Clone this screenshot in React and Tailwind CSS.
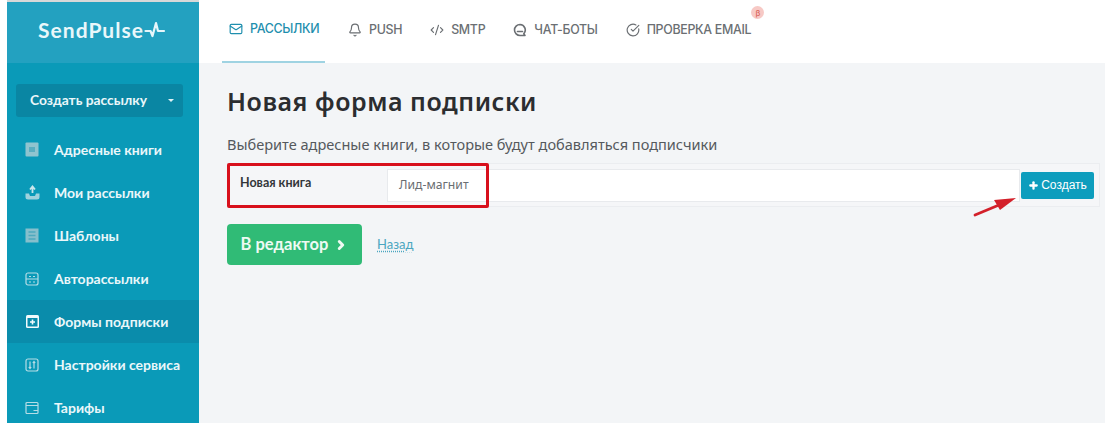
import React from "react";
import { Mail, Bell, CodeXml, CircleCheckBig, ChevronRight, Plus } from "lucide-react";

const ChatIcon = ({ size = 14 }) => (
  <svg width={size} height={size} viewBox="0 0 14 14" fill="none" stroke="currentColor" strokeWidth="1.600">
    <path d="M7 1.500a5.500 5.500 0 1 0 0 11h5l-1.200-1.800A5.500 5.500 0 0 0 7 1.500z" strokeLinejoin="round" />
    <path d="M4.500 8.500h5" strokeLinecap="round" />
  </svg>
);

const tabs = [
  { label: "РАССЫЛКИ", icon: Mail, active: true },
  { label: "PUSH", icon: Bell },
  { label: "SMTP", icon: CodeXml },
  { label: "ЧАТ-БОТЫ", icon: ChatIcon },
  { label: "ПРОВЕРКА EMAIL", icon: CircleCheckBig, beta: true },
];

const BookIcon = () => (
  <svg width="14" height="15" viewBox="0 0 14 15">
    <rect x="0.500" y="0.500" width="13" height="14" rx="1" fill="#8fc4cf" />
    <rect x="4" y="5" width="6" height="5" fill="#5aaec0" />
  </svg>
);

const SendIcon = () => (
  <svg width="15" height="15" viewBox="0 0 15 15">
    <path d="M0.500 8.500h3.500l1 2.500h5l1-2.500h3.500V12a2.500 2.500 0 0 1-2.500 2.500H3A2.500 2.500 0 0 1 0.500 12z" fill="#9fd2dd" />
    <path d="M7.500 8V2.500M5 4.500l2.500-3 2.500 3" fill="none" stroke="#c8e6ec" strokeWidth="1.800" />
  </svg>
);

const TemplateIcon = () => (
  <svg width="14" height="15" viewBox="0 0 14 15">
    <rect x="0.500" y="0.500" width="13" height="14" fill="#86bfcc" />
    <path d="M3.500 4h7M3.500 7.500h7M3.500 11h7" stroke="#4fa9bd" strokeWidth="1.400" />
  </svg>
);

const AutoIcon = () => (
  <svg width="14" height="14" viewBox="0 0 14 14" fill="none" stroke="#b5dde6" strokeWidth="1.200">
    <rect x="1" y="1" width="12" height="12" rx="2" />
    <path d="M1 7h12M4 4.500h2M8 4.500h2M4 10h2M8 10h2" />
  </svg>
);

const FormIcon = () => (
  <svg width="15" height="15" viewBox="0 0 15 15">
    <rect x="1" y="1" width="13" height="13" rx="1.500" fill="#f2fafc" />
    <rect x="2.500" y="4" width="10" height="8.500" fill="#0a8cab" />
    <path d="M7.500 5.500v5M5 8h5" stroke="#f2fafc" strokeWidth="1.600" />
  </svg>
);

const SettingsIcon = () => (
  <svg width="14" height="14" viewBox="0 0 14 14" fill="none" stroke="#b5dde6" strokeWidth="1.200">
    <rect x="1" y="1" width="12" height="12" rx="2" />
    <path d="M5 3.500v7M3.800 9l1.200 1.500L6.200 9M9 10.500v-7M7.800 5L9 3.500 10.200 5" />
  </svg>
);

const PriceIcon = () => (
  <svg width="14" height="14" viewBox="0 0 14 14" fill="none" stroke="#b5dde6" strokeWidth="1.200">
    <rect x="1" y="1.500" width="12" height="11" rx="1" />
    <path d="M1 4.500h12M8.500 9.500H13" />
  </svg>
);

const menu = [
  { label: "Адресные книги", icon: <BookIcon /> },
  { label: "Мои рассылки", icon: <SendIcon /> },
  { label: "Шаблоны", icon: <TemplateIcon /> },
  { label: "Авторассылки", icon: <AutoIcon /> },
  { label: "Формы подписки", icon: <FormIcon />, active: true },
  { label: "Настройки сервиса", icon: <SettingsIcon /> },
  { label: "Тарифы", icon: <PriceIcon /> },
];

const Pulse = () => (
  <svg width="23" height="18" viewBox="0 0 22 18" fill="none" stroke="#e6f6fa" strokeWidth="2.200" strokeLinejoin="round" strokeLinecap="round">
    <path d="M1 10h5l2 5 3.500-13 2 8h6" />
  </svg>
);

export default function App() {
  return (
    <div className="w-[1110px] h-[428px] overflow-hidden bg-white flex pl-[7px] pr-[5px] pb-[5px] font-['Noto_Sans',sans-serif]">
      {/* Sidebar */}
      <aside className="w-[192px] shrink-0 flex flex-col bg-[#0a9ab8] border-t-2 border-[#d8d8d8] overflow-hidden">
        <div className="h-[61px] shrink-0 bg-[#23a1c0] flex items-center justify-center text-[#e9f7fa] text-[21px] font-bold font-['Lato',sans-serif] tracking-[1px] pb-[6px] pr-[1px]">
          SendPulse
          <Pulse />
        </div>
        <div className="ml-[9px] mr-[16px] mt-[21px] h-[33px] shrink-0 rounded-[3px] bg-[#0a86a3] flex items-center justify-between pl-[14px] pr-[9px] text-[#eaf7fa] text-[13.800px] font-bold font-['Lato',sans-serif]">
          Создать рассылку
          <span className="w-0 h-0 border-x-[3px] border-x-transparent border-t-[3px] border-t-[#dff2f6]" />
        </div>
        <nav className="mt-[11px] flex flex-col">
          {menu.map((m) => (
            <div
              key={m.label}
              className={`h-[43px] shrink-0 flex items-center pl-[18px] text-[#eaf7fa] text-[14px] font-bold font-['Lato',sans-serif] ${m.active ? "bg-[#0a8cab]" : ""}`}
            >
              <span className="w-[29px] flex items-center">{m.icon}</span>
              {m.label}
            </div>
          ))}
        </nav>
      </aside>

      <div className="flex-1 flex flex-col bg-[#f3f5f7]">
        {/* Top tabs */}
        <header className="h-[63px] shrink-0 bg-white flex pl-[23px] gap-[28px]">
          {tabs.map((t) => {
            const Icon = t.icon;
            return (
              <div
                key={t.label}
                className={`relative flex items-center gap-[7px] h-[63px] pb-[3px] text-[12.400px] font-medium font-['Inter',sans-serif] tracking-[-0.3px] ${
                  t.active ? "text-[#1f8fae] border-b-2 border-[#9fd3e2] w-[103px] pl-[7px] -mr-[5px]" : "text-[#6b6f73]"
                }`}
              >
                <Icon size={14} strokeWidth={2} />
                {t.label}
                {t.beta && (
                  <span className="absolute right-[-13px] top-[6px] w-[13px] h-[13px] rounded-full bg-[#f7c9c5] text-[#d9645c] text-[8px] flex items-center justify-center">
                    β
                  </span>
                )}
              </div>
            );
          })}
        </header>

        {/* Content */}
        <main className="relative pl-[28px] pr-[5px] pt-[21px]">
          <h1 className="text-[25px] leading-[34px] font-semibold text-[#2b2d30] tracking-[0.55px] font-['Noto_Sans',sans-serif]">
            Новая форма подписки
          </h1>
          <p className="mt-[16px] text-[14.550px] leading-[20px] text-[#55595d] font-['Noto_Sans',sans-serif]">
            Выберите адресные книги, в которые будут добавляться подписчики
          </p>

          <div className="mt-[9px] h-[44px] flex items-center bg-[#f5f6f8] border border-[#ebedf0]">
            <span className="w-[159px] pl-[12px] pb-[4px] shrink-0 text-[12.500px] font-bold text-[#33363a] font-['Lato',sans-serif]">Новая книга</span>
            <div className="flex-1 h-[33px] bg-white border border-[#e8eaed] flex items-center pl-[11px] text-[12.200px] text-[#6a6e72] font-['Noto_Sans',sans-serif]">
              Лид-магнит
            </div>
            <button className="ml-[1px] mr-[5px] w-[73px] h-[27px] rounded-[2px] bg-[#0d9dbd] text-white text-[12px] flex items-center justify-center gap-[2px] font-['Liberation_Sans',sans-serif]">
              <Plus size={11} strokeWidth={5} />
              Создать
            </button>
          </div>

          <div className="mt-[17px] flex items-center">
            <button className="w-[135px] h-[41px] rounded-[4px] bg-[#30bb76] text-[#eefaf3] text-[16.500px] font-bold flex items-center justify-center gap-[6px] font-['Lato',sans-serif]">
              В редактор
              <ChevronRight size={14} strokeWidth={5} />
            </button>
            <a className="ml-[15px] text-[13px] text-[#4ba6c0] underline decoration-dotted underline-offset-2 font-['Lato',sans-serif]">Назад</a>
          </div>

          {/* Annotations drawn over the screenshot */}
          <div className="absolute left-[28px] top-[100px] w-[262px] h-[45px] border-[3px] border-[#d8101c] rounded-[2px]" />
          <svg className="absolute left-[770px] top-[131px]" width="52" height="24" viewBox="0 0 52 24">
            <path d="M6 21L30 11" stroke="#d3202a" strokeWidth="2.800" strokeLinecap="round" />
            <path d="M47 4L25 6l6 10z" fill="#d3202a" />
          </svg>
        </main>
      </div>
    </div>
  );
}
